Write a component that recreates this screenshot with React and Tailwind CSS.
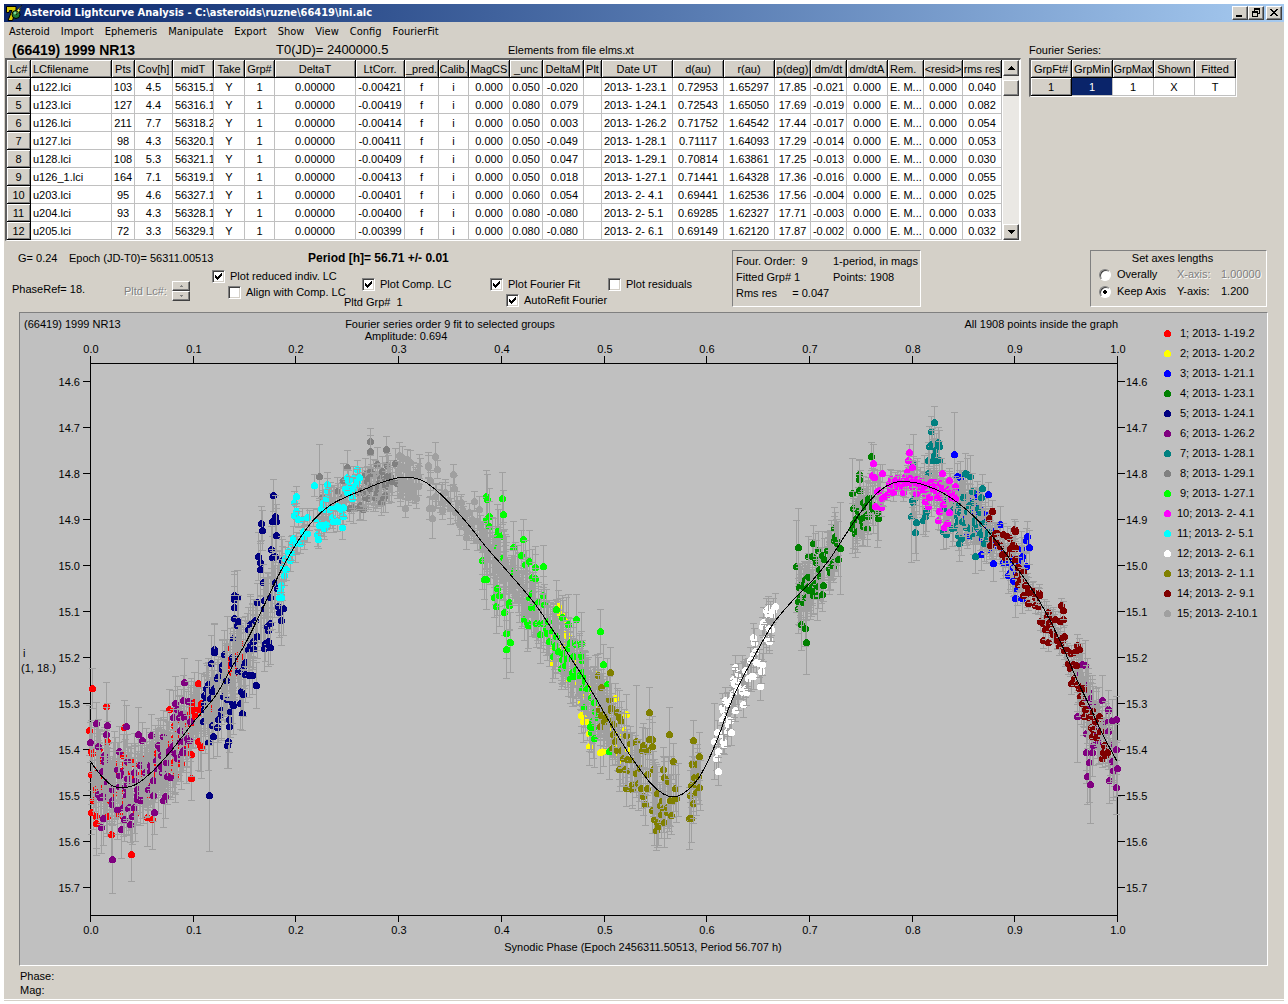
import { useState } from "react";

const menuItems = ["Asteroid", "Import", "Ephemeris", "Manipulate", "Export", "Show", "View", "Config", "FourierFit"];

const columns = [
  { label: "Lc#", width: 24 },
  { label: "LCfilename", width: 81, align: "left" },
  { label: "Pts", width: 23 },
  { label: "Cov[h]", width: 38 },
  { label: "midT", width: 41, align: "clip" },
  { label: "Take", width: 31 },
  { label: "Grp#", width: 30 },
  { label: "DeltaT", width: 81 },
  { label: "LtCorr.", width: 49 },
  { label: "_pred.", width: 34 },
  { label: "Calib.", width: 30 },
  { label: "MagCS", width: 41 },
  { label: "_unc", width: 33 },
  { label: "DeltaM", width: 41, align: "right" },
  { label: "Plt", width: 18 },
  { label: "Date UT", width: 71, align: "clip" },
  { label: "d(au)", width: 51 },
  { label: "r(au)", width: 51 },
  { label: "p(deg)", width: 36 },
  { label: "dm/dt", width: 36 },
  { label: "dm/dtA", width: 41 },
  { label: "Rem.", width: 36, align: "left" },
  { label: "<resid>", width: 39 },
  { label: "rms res", width: 39 },
];

const rows = [
  ["4", "u122.lci", "103", "4.5", "56315.1", "Y", "1", "0.00000", "-0.00421", "f", "i", "0.000", "0.050", "-0.020", "", "2013- 1-23.1", "0.72953", "1.65297", "17.85", "-0.021", "0.000", "E. M...", "0.000", "0.040"],
  ["5", "u123.lci", "127", "4.4", "56316.1", "Y", "1", "0.00000", "-0.00419", "f", "i", "0.000", "0.080", "0.079", "", "2013- 1-24.1", "0.72543", "1.65050", "17.69", "-0.019", "0.000", "E. M...", "0.000", "0.082"],
  ["6", "u126.lci", "211", "7.7", "56318.2", "Y", "1", "0.00000", "-0.00414", "f", "i", "0.000", "0.050", "0.003", "", "2013- 1-26.2", "0.71752", "1.64542", "17.44", "-0.017", "0.000", "E. M...", "0.000", "0.054"],
  ["7", "u127.lci", "98", "4.3", "56320.1", "Y", "1", "0.00000", "-0.00411", "f", "i", "0.000", "0.050", "-0.049", "", "2013- 1-28.1", "0.71117", "1.64093", "17.29", "-0.014", "0.000", "E. M...", "0.000", "0.053"],
  ["8", "u128.lci", "108", "5.3", "56321.1", "Y", "1", "0.00000", "-0.00409", "f", "i", "0.000", "0.050", "0.047", "", "2013- 1-29.1", "0.70814", "1.63861", "17.25", "-0.013", "0.000", "E. M...", "0.000", "0.030"],
  ["9", "u126_1.lci", "164", "7.1", "56319.1", "Y", "1", "0.00000", "-0.00413", "f", "i", "0.000", "0.050", "0.018", "", "2013- 1-27.1", "0.71441", "1.64328", "17.36", "-0.016", "0.000", "E. M...", "0.000", "0.055"],
  ["10", "u203.lci", "95", "4.6", "56327.1", "Y", "1", "0.00000", "-0.00401", "f", "i", "0.000", "0.060", "0.054", "", "2013- 2- 4.1", "0.69441", "1.62536", "17.56", "-0.004", "0.000", "E. M...", "0.000", "0.025"],
  ["11", "u204.lci", "93", "4.3", "56328.1", "Y", "1", "0.00000", "-0.00400", "f", "i", "0.000", "0.080", "-0.080", "", "2013- 2- 5.1", "0.69285", "1.62327", "17.71", "-0.003", "0.000", "E. M...", "0.000", "0.033"],
  ["12", "u205.lci", "72", "3.3", "56329.1", "Y", "1", "0.00000", "-0.00399", "f", "i", "0.000", "0.080", "-0.080", "", "2013- 2- 6.1", "0.69149", "1.62120", "17.87", "-0.002", "0.000", "E. M...", "0.000", "0.032"],
];

// Measured positions come in three overlapping sheets (A, B, C); each starts
// at its own x and has 3 units per pixel across and 2.904 down.
const sheetX = { A: 80, B: 400, C: 680 };

function readSheet(sheet, text) {
  return text
    .trim()
    .split(/\s+/)
    .map((pair) => {
      const [x, y] = pair.split(",").map(Number);
      return [sheetX[sheet] + x / 3, 360 + y / 2.904];
    });
}

const curve = [
  ...readSheet("A", "31,1168 60,1206 95,1238 130,1245 170,1234 220,1195 280,1130 340,1055 405,980 450,905 505,810 550,720 600,620 650,535 700,468 750,425 800,400 850,380 900,360 950,346"),
  ...readSheet("B", "10,344 45,346 80,360 130,400 200,475 260,548 330,625 400,705 450,775 500,850 560,940 620,1040 660,1105 700,1165 750,1230 790,1263 820,1271 850,1262 890,1225"),
  ...readSheet("C", "80,1175 110,1110 150,1005 180,940 225,860 275,775 330,710 400,640 450,580 500,505 550,435 600,382 640,360 680,356 730,365 790,390 850,430 900,475 950,530 1000,595 1050,660 1100,740 1150,840 1190,930 1230,1010 1265,1085 1311,1168"),
];

// fill: [from x, to x, count, spread around the fit]
// bars: same, for readings of which only the error bar is drawn
const series = [
  {
    label: "1; 2013- 1-19.2",
    color: "#ff0000",
    err: 26,
    A: "37,954 78,1009 27,1078 35,1145 32,1138 32,1206 45,1250 40,1280 32,1316 49,1326 49,1348 82,1110 76,1267 86,1285 82,1326 133,1070 154,1438 267,1015 354,942 334,1217 345,1010 350,1030 340,1020 356,1015 363,1000 348,1018 360,1120 362,1126 355,1108 345,1040 92,1378 200,1330 215,1335 285,1210 330,1090 105,1175 130,1150 465,912 440,835 450,870 448,890 470,860",
    fill: [[95, 195, 75, 34], [208, 240, 12, 14]],
    bars: [[92, 190, 70, 30]],
  },
  {
    label: "2; 2013- 1-20.2",
    color: "#ffff00",
    err: 20,
    B: "475,718 470,745 480,740 490,745 497,760 465,765 495,800 468,810 457,880 520,820 543,995 543,1033 550,1050 555,1040 560,1050 567,1085 567,1125 645,985 677,1030 590,915 600,1140 610,1138 660,1170 672,1078 680,1135 655,1090 520,945 505,925",
    fill: [[553, 622, 25, 22]],
    bars: [[553, 622, 60, 22]],
  },
  {
    label: "3; 2013- 1-21.1",
    color: "#0000ff",
    err: 15,
    C: "823,277,42 830,340 840,343 838,372 925,393 858,460 855,480 860,512 903,567 940,592 915,450 960,480 1042,513 1037,525 1047,547 1023,550 1025,572 1038,602 998,605 990,620 985,628 1000,643 1010,668 1005,694 1025,694 965,545 890,390 905,520 880,440 870,405",
    fill: [[957, 1022, 34, 20]],
    bars: [[957, 1028, 60, 18]],
  },
  {
    label: "4; 2013- 1-23.1",
    color: "#008000",
    err: 21,
    C: "353,545,39 348,600,46 400,533 415,555 385,572 395,573 405,578 408,590 427,568 432,580 440,555 461,492 466,515 462,525 468,525 479,548,46 470,535 475,580 450,605 458,600 448,608 460,590 450,618 385,630 375,638 372,650 360,655 368,660 383,660 395,660 405,650 415,660 428,657 390,672 400,685 410,685 425,681 379,690 361,690 369,707 355,722 362,770 375,782 379,823,32 572,283,14 538,335,14 538,349 537,380 541,381 517,389,35 520,432 550,415 556,430 570,405 575,420 560,450 540,455 530,465 525,480 520,475 530,500 525,505 550,485 560,490 545,470 516,492 565,455 590,445,35 595,463 580,435 535,440",
    fill: [[798, 824, 12, 14], [853, 877, 8, 10]],
    bars: [[798, 838, 44, 16], [853, 880, 24, 10]],
  },
  {
    label: "5; 2013- 1-24.1",
    color: "#000080",
    err: 23,
    A: "580,396,16 586,455 577,469 588,470 544,477,17 547,497 589,512 572,553 577,576 585,573 534,572 541,590 541,611 549,649 585,649 606,585 590,664 463,685 472,692 463,698 463,721 461,752 475,760 472,773 460,811 402,842 402,850 433,856 457,864 457,884 392,884 427,890 425,900 410,925 413,922 437,931 383,945 379,954 401,954 395,965 405,965 373,975 378,983 373,1000 371,1015 370,1050 390,985 423,1020 423,1030 415,1045 428,978 440,988 455,995 458,1005 450,1022 447,1045 447,1065 397,1063 411,1070 400,1096 384,1113 443,1110 440,1120 386,1265,56 532,706 526,758 516,766 510,770 505,785 532,803 571,768 561,776 563,787 571,837 555,825 565,818 553,840 520,842 505,842 510,830 520,820 551,700 570,692 551,722 494,880 491,890 484,907 475,907 496,915 508,918 515,918 527,947 484,965 490,973 479,1000 485,1029 594,718 610,722 597,736 602,757",
    fill: [],
    bars: [[204, 246, 56, 28], [246, 284, 36, 22]],
  },
  {
    label: "6; 2013- 1-26.2",
    color: "#800080",
    err: 23,
    A: "82,1062 313,939 308,990 323,994 285,1000 290,1015 278,1040 296,1040 312,1040 329,1050 303,1030 139,1067 214,1093 248,1094 175,1090 185,1105 116,1139 54,1125 73,1149 71,1167 79,1090 30,1113 48,1058 142,1168 161,1200 133,1197 112,1190 95,1250 118,1240 140,1235 59,1271 69,1270 96,1280 68,1332 62,1360 122,1365 133,1336 155,1328 150,1350 223,1316 97,1453,34 95,1292 112,1308 128,1302 145,1305 162,1300 170,1278 180,1280 190,1280 172,1265 205,1250 210,1242 218,1224 228,1165 232,1190 180,1180 195,1200 210,1195 245,1200 262,1210 270,1215 255,1270 240,1130 235,1120 258,1170 280,1120 290,1160 305,1140 310,1135 300,1078 322,1100 328,1105 268,1140 250,1280 300,1110",
    C: "1207,885 1215,888 1193,915 1190,942 1225,963 1230,985 1265,990 1235,1000 1283,1015 1285,1020 1190,1038,46 1277,1053 1295,1048 1307,1046 1275,1080 1217,1087,50 1240,1120 1287,1115 1218,1142 1235,1140 1307,1133 1227,1171,40 1295,1168 1300,1193 1310,1188 1220,1212 1287,1223 1231,1233,39 1309,1242 1255,1110 1250,1060",
    fill: [[94, 188, 20, 26], [1080, 1116, 8, 28]],
    bars: [[92, 190, 110, 28], [1076, 1116, 40, 26]],
  },
  {
    label: "7; 2013- 1-28.1",
    color: "#008080",
    err: 17,
    C: "763,184 752,210 775,240 757,245 746,254 757,252 768,260 778,254 763,280 758,292 743,294 768,292 777,292 745,332 700,305,30 697,410 703,405 700,415 737,440 735,455 730,468 692,457,46 707,472,38 706,501 855,332 862,333 871,340 877,384 907,376 903,400 853,395 848,400 867,425 862,440 895,432 900,445 885,465 855,475 845,470 832,455 830,480 820,490 815,490 835,510 842,520 838,535 790,500 798,507 870,490 880,515 900,505 885,475 910,475 905,500 920,520 912,535 886,573 925,500 800,435 820,435 815,440 840,445 905,475",
    fill: [[940, 985, 16, 20]],
    bars: [[912, 988, 80, 22]],
  },
  {
    label: "8; 2013- 1-29.1",
    color: "#808080",
    err: 14,
    A: "718,339,32 772,384 802,314 788,350 871,239 869,268 919,260 892,304 921,308 945,303 870,325 880,335 855,335 865,345 905,325 900,345 895,365 915,345 930,340 865,405 885,400 915,395 902,415 908,405 850,435 838,430 820,430 808,432 870,375 890,385 925,370 935,355 950,360 725,400 785,400 880,375 855,400",
    fill: [[350, 410, 14, 15]],
    bars: [[322, 410, 70, 16]],
  },
  {
    label: "9; 2013- 1-27.1",
    color: "#00ff00",
    err: 25,
    B: "257,398 262,408 306,404 308,451 266,457 258,465 268,485 295,497 292,512 299,515 340,545 368,524 362,570 374,594 387,588 406,605 428,600 397,632 405,636 246,585 251,640 257,640 245,548 288,548 340,615 310,575 290,665 297,685 281,692 289,716 311,736 326,715 326,705 319,795 331,823 319,843 430,686 396,680 388,690 392,720 405,720 415,705 432,712 372,755 382,765 385,772 408,768 420,768 430,768 445,760 420,800 440,795 447,820 455,790 469,727 487,750 503,770 528,756 465,835 473,848 459,862 510,822 528,828 543,826 490,855 487,870 500,868 520,862 543,860 545,875 495,890 483,898 515,910 520,922 510,925 540,915 555,935 545,955 560,955 601,791 608,886 622,944 572,983 583,995 552,1012 585,1023 590,1040 575,1050 570,1065 580,1070 573,1083 583,1100 627,1137",
    fill: [[545, 592, 10, 14]],
    bars: [[484, 540, 60, 22], [540, 608, 70, 20]],
  },
  {
    label: "10; 2013- 2- 4.1",
    color: "#ff00ff",
    err: 8,
    C: "688,271 684,294 580,303,19 575,338 583,343 607,332 695,314 682,326 674,340 650,342 645,350 628,360 638,365 660,355 665,360 630,378 640,385 620,393 610,400 596,380 590,383 605,405 586,427 603,430 655,375 670,370 680,350 690,345 700,350 712,345 715,360 725,352 695,370 708,388 720,380 730,378 735,390 740,378 750,358 757,358 765,358 780,360 787,332 806,350 785,375 805,378 826,370 810,385 748,400 735,412 745,428 770,400 780,400 790,420 778,442 808,445 774,468 800,475 793,487 815,405 825,405 820,395 670,385",
    fill: [[885, 955, 22, 7]],
    bars: [[885, 955, 14, 10]],
  },
  {
    label: "11; 2013- 2- 5.1",
    color: "#00ffff",
    err: 10,
    A: "703,365 742,362 741,380 647,399 641,416 648,440 643,452 655,465 666,465 681,460 710,465 743,408 739,405 730,415 722,432 735,436 750,435 758,432 770,428 776,430 783,435 790,455 785,487 772,470 760,470 755,460 738,478 722,480 732,490 718,482 710,508 714,523 668,500 680,505 672,518 660,535 648,535 640,520 636,535 636,560 625,558 615,578 630,585 610,605 618,610 613,628 603,655 600,675 603,690,38 597,690 800,342 804,352 820,345 832,320 838,344 830,355 808,370 795,375 820,375 812,390 815,405 800,385 825,365 790,430",
    fill: [],
    bars: [[280, 345, 18, 12]],
  },
  {
    label: "12; 2013- 2- 6.1",
    color: "#ffffff",
    err: 12,
    C: "285,717 280,728 265,723 258,728 270,740 263,740 277,740 250,765 247,776 270,777 273,785 220,807 222,823 266,812 268,818 225,848 218,858 209,875 228,880 238,882 245,886 242,907 212,920 218,920 205,925 240,950 165,895 175,912 160,930 165,945 170,960 183,950 165,935 195,955 190,968 198,968 135,990 150,995 155,990 145,1000 126,1012 130,1018 165,1020 190,1003 125,1045 148,1048 143,1060 110,1083 153,1083 140,1080 103,1108,38 130,1108 133,1118 115,1137 108,1158 115,1195 163,940 187,958 140,995 150,1048",
    fill: [[720, 772, 10, 7]],
    bars: [[716, 775, 22, 14]],
  },
  {
    label: "13; 2013- 2- 1.1",
    color: "#808000",
    err: 22,
    B: "631,910 593,919 603,952 626,988 632,1010 632,1020 652,1026 656,1040 664,1052 597,1015 603,1035 612,1050 600,1065 615,1040 620,1045 640,1060 638,1090 645,1110 679,1092 691,1115 707,1108,56 652,1135 662,1135 635,1130 748,1026 748,1103 756,1103 757,1125 730,1122 735,1130 740,1138 725,1135 808,1090 820,1168 670,1160 680,1163 693,1165 657,1190 674,1190 690,1195 707,1203 720,1187 740,1205 760,1192 789,1192 793,1215 803,1225 677,1247 697,1235 697,1248 713,1232 722,1245 742,1247 729,1270 736,1293 770,1260 825,1247 810,1280 829,1274 820,1280 785,1280 779,1296 790,1305 800,1300 757,1310 782,1320 800,1315 813,1325 762,1337 770,1345 773,1355 792,1345 768,1368 880,1105 898,1154 877,1177 890,1177 882,1214 895,1212 873,1238 885,1235 898,1242 888,1257 870,1267 880,1288 868,1334,31 873,1334",
    fill: [],
    bars: [[594, 640, 36, 18], [640, 678, 24, 20], [689, 700, 6, 20]],
  },
  {
    label: "14; 2013- 2- 9.1",
    color: "#800000",
    err: 9,
    C: "937,440 928,462 1002,495 1006,500 945,505 937,520 952,505 970,508 980,515 990,520 930,540 950,530 960,540 998,537 1005,548 965,565 975,570 985,565 975,575 990,548 1005,580 1015,605 1030,615 1010,628 1020,640 1015,652 1035,655 1045,665 1040,680 1030,685 1050,680 1058,675 1076,680 1065,690 1045,710 1065,715 1075,718 1105,735 1100,745 1115,750 1080,760 1088,768 1108,765 1125,755 1140,760 1148,755 1142,713 1150,730 1095,785 1105,783 1115,790 1120,800 1090,815 1103,823 1153,803 1145,815 1137,832 1130,815 1160,845 1172,855 1183,850 1192,830 1197,842 1190,845 1165,882 1180,885 1187,890 1170,898 1182,925 1190,945 1173,940 1198,955 1212,955 1200,980 1205,998 1215,1015 1213,1037 1228,1040 1240,1022 1245,1050 1258,1037 1232,1070 1240,1075 1262,1080 1235,1095 1248,1097 1272,1120 1270,1140 1280,1140 1275,1150 1265,1160",
    fill: [[992, 1104, 14, 7]],
    bars: [[990, 1110, 40, 13]],
  },
  {
    label: "15; 2013- 2-10.1",
    color: "#a0a0a0",
    err: 11,
    A: "958,280 966,285 980,290 990,300 960,310 975,320 985,330 1000,335 960,340 970,350 990,355 1015,338 965,370 980,380 995,390 1009,405 975,433 960,395 985,400 1000,370 1043,310 1015,370 955,325",
    B: "104,283 83,309 110,320 91,352 158,335 163,376 182,415 223,411 105,398 135,385 125,415 145,410 97,462,20 87,432 96,434 127,438 150,432 165,445 178,475 199,490 199,518 208,445 215,465 238,437 230,470 240,485 250,500 260,530 316,584 280,560 290,600 300,620 310,640 330,640 345,680 355,700",
    fill: [[460, 525, 24, 9]],
    bars: [[398, 420, 20, 20], [430, 525, 40, 12]],
  },
];

function fitAt(x) {
  const i = Math.max(1, curve.findIndex((p) => p[0] >= x));
  const [x0, y0] = curve[i - 1];
  const [x1, y1] = curve[i];
  return y0 + ((x - x0) / (x1 - x0)) * (y1 - y0);
}

function curvePath(points) {
  let d = `M${points[0][0]} ${points[0][1]}`;
  for (let i = 0; i < points.length - 1; i++) {
    const p0 = points[Math.max(i - 1, 0)];
    const p1 = points[i];
    const p2 = points[i + 1];
    const p3 = points[Math.min(i + 2, points.length - 1)];
    const c1 = [p1[0] + (p2[0] - p0[0]) / 6, p1[1] + (p2[1] - p0[1]) / 6];
    const c2 = [p2[0] - (p3[0] - p1[0]) / 6, p2[1] - (p3[1] - p1[1]) / 6];
    d += `C${c1.join(" ")} ${c2.join(" ")} ${p2.join(" ")}`;
  }
  return d;
}

function seriesPoints(s, seed) {
  let state = seed * 7919 + 13;
  const random = () => {
    state = (state * 16807) % 2147483647;
    return state / 2147483647;
  };
  const points = [];
  for (const sheet of ["A", "B", "C"]) {
    if (!s[sheet]) continue;
    const errs = s[sheet].split(/\s+/).map((p) => Number(p.split(",")[2]) || 0);
    readSheet(sheet, s[sheet]).forEach(([x, y], i) => {
      points.push({ x, y, dot: true, err: errs[i] || s.err * (0.75 + random() * 0.5) });
    });
  }
  const scatter = (ranges, dot) => {
    for (const [from, to, count, spread] of ranges) {
      for (let i = 0; i < count; i++) {
        const x = from + random() * (to - from);
        const y = fitAt(x) + (random() + random() - 1) * spread;
        points.push({ x, y, dot, err: s.err * (0.7 + random() * 0.5) });
      }
    }
  };
  scatter(s.fill, true);
  scatter(s.bars, false);
  return points
    .map((p) => ({ ...p, x: Math.round(p.x), y: Math.round(p.y), err: Math.round(p.err) }))
    .sort((a, b) => a.x - b.x);
}

const plotted = series.map((s, i) => ({ ...s, points: seriesPoints(s, i + 1) }));

const phaseTicks = [90, 193, 295, 398, 501, 604, 706, 809, 912, 1014, 1117];
const magTicks = Array.from({ length: 12 }, (_, i) => ({ y: 382 + i * 46, label: (14.6 + i * 0.1).toFixed(1) }));

function Lightcurve() {
  return (
    <svg viewBox="20 314 1247 652" className="block h-auto w-full" fontSize="11" role="img" aria-label="Lightcurve">
      <g fill="black">
        <text x="24" y="329">(66419) 1999 NR13</text>
        <text x="450" y="329" textAnchor="middle">Fourier series order 9 fit to selected groups</text>
        <text x="406" y="341" textAnchor="middle">Amplitude: 0.694</text>
        <text x="1118" y="329" textAnchor="end">All 1908 points inside the graph</text>
        <text x="643" y="952" textAnchor="middle">Synodic Phase (Epoch 2456311.50513, Period 56.707 h)</text>
        <text x="23" y="658">i</text>
        <text x="21" y="673">(1, 18.)</text>
        {phaseTicks.map((x, i) => (
          <g key={x} textAnchor="middle">
            <text x={x + 1} y="354">{(i / 10).toFixed(1)}</text>
            <text x={x + 1} y="935">{(i / 10).toFixed(1)}</text>
          </g>
        ))}
        {magTicks.map((t) => (
          <g key={t.y}>
            <text x="80" y={t.y + 5} textAnchor="end">{t.label}</text>
            <text x="1126" y={t.y + 5}>{t.label}</text>
          </g>
        ))}
      </g>

      <g stroke="black" fill="none" shapeRendering="crispEdges">
        <path d="M90.5 364.5H1117.5V916.5H90.5Z" />
        {phaseTicks.map((x) => (
          <path key={x} d={`M${x + 0.5} 357V364M${x + 0.5} 917V923`} />
        ))}
        {magTicks.map((t) => (
          <path key={t.y} d={`M83 ${t.y + 0.5}H90M1118 ${t.y + 0.5}H1125`} />
        ))}
      </g>

      {plotted.map((s) => (
        <g key={s.label} fill={s.color} shapeRendering="crispEdges">
          {s.points.map((p, i) => (
            <g key={i}>
              <path
                d={`M${p.x - 3} ${p.y - p.err + 0.5}h7m-3.5 0v${p.err * 2}m-3.5 0h7`}
                stroke="#a0a0a0"
                fill="none"
              />
              {p.dot && <circle cx={p.x + 0.5} cy={p.y + 0.5} r="3.5" />}
            </g>
          ))}
        </g>
      ))}
      <path d={curvePath(curve)} stroke="black" fill="none" shapeRendering="crispEdges" />

      {series.map((s, i) => (
        <g key={s.label}>
          <circle cx="1167.5" cy={334.5 + i * 20} r="3.5" fill={s.color} shapeRendering="crispEdges" />
          <text x={i < 9 ? 1180 : 1177} y={338 + i * 20}>{s.label}</text>
        </g>
      ))}
    </svg>
  );
}

const raised =
  "border border-t-white border-l-white border-r-[#404040] border-b-[#404040] bg-[#d4d0c8] shadow-[inset_-1px_-1px_0_#808080]";
const sunken = "border border-t-[#808080] border-l-[#808080] border-r-white border-b-white";
const gridFrame =
  "border-t-2 border-l-2 border-r border-b border-t-[#606060] border-l-[#606060] border-r-white border-b-white";
const fixedCell =
  "h-[18px] overflow-hidden border-r border-b border-black bg-[#d4d0c8] p-0 text-center font-normal whitespace-nowrap shadow-[inset_1px_1px_0_#fff,inset_-1px_-1px_0_#808080]";
const bodyCell = "h-[18px] overflow-hidden border-r border-b border-[#c0c0c0] whitespace-nowrap";

function bodyAlign(align) {
  if (align === "left" || align === "clip") return "pl-[2px] text-left";
  if (align === "right") return "pr-[5px] text-right";
  return "text-center";
}

function LightcurveTable() {
  return (
    <div className={`flex bg-white ${gridFrame}`}>
      <table className="w-[995px] table-fixed border-separate border-spacing-0">
        <colgroup>
          {columns.map((c) => (
            <col key={c.label} style={{ width: c.width }} />
          ))}
        </colgroup>
        <thead>
          <tr>
            {columns.map((c) => (
              <th key={c.label} className={fixedCell}>
                {c.align === "left" ? <div className="pl-[2px] text-left">{c.label}</div> : c.label}
              </th>
            ))}
          </tr>
        </thead>
        <tbody>
          {rows.map((row) => (
            <tr key={row[0]}>
              <th className={fixedCell}>{row[0]}</th>
              {row.slice(1).map((value, i) => (
                <td key={i} className={`${bodyCell} ${bodyAlign(columns[i + 1].align)}`}>
                  {value}
                </td>
              ))}
            </tr>
          ))}
        </tbody>
      </table>
      <div className="mx-px flex w-4 flex-col bg-[#eae8e4]">
        <button aria-label="Scroll up" className={`flex h-4 items-center justify-center ${raised}`}>
          <svg width="7" height="4" shapeRendering="crispEdges"><path d="M3 0h1v1h1v1h1v1h1v1H0V3h1V2h1V1h1z" /></svg>
        </button>
        <div className={`mt-1 h-4 ${raised}`} />
        <button aria-label="Scroll down" className={`mt-auto flex h-4 items-center justify-center ${raised}`}>
          <svg width="7" height="4" shapeRendering="crispEdges"><path d="M0 0h7v1H6v1H5v1H4v1H3V3H2V2H1V1H0z" /></svg>
        </button>
      </div>
    </div>
  );
}

function FourierTable() {
  return (
    <div className={`bg-white ${gridFrame}`}>
      <table className="w-[205px] table-fixed border-separate border-spacing-0">
        <thead>
          <tr>
            {["GrpFt#", "GrpMin", "GrpMax", "Shown", "Fitted"].map((label) => (
              <th key={label} className={fixedCell}>{label}</th>
            ))}
          </tr>
        </thead>
        <tbody className="text-center">
          <tr>
            <th className={fixedCell}>1</th>
            <td className={`${bodyCell} bg-[#0a246a] text-white`}>1</td>
            <td className={bodyCell}>1</td>
            <td className={bodyCell}>X</td>
            <td className={bodyCell}>T</td>
          </tr>
        </tbody>
      </table>
    </div>
  );
}

function Check({ label, defaultChecked }) {
  return (
    <label className="flex items-center gap-[5px] whitespace-nowrap">
      <span className="relative size-[13px]">
        <input
          type="checkbox"
          defaultChecked={defaultChecked}
          className="peer block size-[13px] appearance-none border border-t-[#808080] border-r-white border-b-white border-l-[#808080] bg-white shadow-[inset_1px_1px_0_#404040,inset_-1px_-1px_0_#d4d0c8]"
        />
        <svg
          viewBox="0 0 13 13"
          shapeRendering="crispEdges"
          className="pointer-events-none absolute inset-0 hidden peer-checked:block"
        >
          <path d="M3 5h1v1h1v1h1V6h1V5h1V4h1V3h1v3H9v1H8v1H7v1H6v1H5V9H4V8H3z" />
        </svg>
      </span>
      {label}
    </label>
  );
}

function AxisRadio({ label, value, selected, onSelect }) {
  return (
    <label className="flex items-center gap-[6px]">
      <input
        type="radio"
        name="axes"
        value={value}
        checked={selected === value}
        onChange={() => onSelect(value)}
        className="size-3 appearance-none rounded-full border border-t-[#808080] border-r-white border-b-white border-l-[#808080] bg-white shadow-[inset_1px_1px_0_#404040] checked:bg-[radial-gradient(circle,#000_0_2px,#fff_2px)]"
      />
      {label}
    </label>
  );
}

const disabledText = "text-[#808080] [text-shadow:1px_1px_0_#fff]";

function Controls() {
  const [axes, setAxes] = useState("keep");

  return (
    <div className="flex items-start pt-[9px]">
      <div className="w-[728px]">
        <div className="flex h-4 items-center whitespace-nowrap">
          <span className="ml-[14px] w-[51px]">G= 0.24</span>
          <span className="w-[239px]">Epoch (JD-T0)= 56311.00513</span>
          <span className="text-[12px] font-bold">Period [h]= 56.71 +/- 0.01</span>
        </div>
        <div className="flex items-start pt-[2px]">
          <span className="mt-[14px] ml-2 w-[112px]">PhaseRef= 18.</span>
          <span className={`mt-4 w-12 ${disabledText}`}>Pltd Lc#:</span>
          <div className="mt-[13px] w-[18px]">
            <button disabled aria-label="Next" className={`flex h-[10px] w-[18px] items-center justify-center ${raised}`}>
              <svg width="5" height="3" fill="#808080" shapeRendering="crispEdges"><path d="M2 0h1v1h1v1H1V1h1z" /></svg>
            </button>
            <button disabled aria-label="Previous" className={`flex h-[10px] w-[18px] items-center justify-center ${raised}`}>
              <svg width="5" height="3" fill="#808080" shapeRendering="crispEdges"><path d="M1 0h3v1H3v1H2V1H1z" /></svg>
            </button>
          </div>
          <div className="ml-[22px] w-[132px] pt-[1px]">
            <Check label="Plot reduced indiv. LC" defaultChecked />
            <div className="pt-[2px] pl-4">
              <Check label="Align with Comp. LC" />
            </div>
          </div>
          <div className="w-[146px] pt-[9px]">
            <div className="pl-[18px]">
              <Check label="Plot Comp. LC" defaultChecked />
            </div>
            <div className="pt-1 whitespace-pre">Pltd Grp#  1</div>
          </div>
          <div className="w-[118px] pt-[9px]">
            <Check label="Plot Fourier Fit" defaultChecked />
            <div className="pt-[2px] pl-4">
              <Check label="AutoRefit Fourier" defaultChecked />
            </div>
          </div>
          <div className="pt-[9px]">
            <Check label="Plot residuals" />
          </div>
        </div>
      </div>

      <div className={`grid h-[57px] w-[189px] grid-cols-[97px_1fr] content-start pt-[2px] pl-[3px] leading-4 whitespace-pre ${sunken}`}>
        <span>Four. Order:  9</span>
        <span>1-period, in mags</span>
        <span>Fitted Grp# 1</span>
        <span>Points: 1908</span>
        <span>Rms res     = 0.047</span>
      </div>

      <fieldset className={`mr-[17px] ml-auto h-[57px] w-[177px] pl-2 ${sunken}`}>
        <div className="pr-5 text-center leading-[15px]">Set axes lengths</div>
        <div className="grid grid-cols-[78px_44px_1fr] items-center leading-[17px]">
          <AxisRadio label="Overally" value="overall" selected={axes} onSelect={setAxes} />
          <span className={disabledText}>X-axis:</span>
          <span className={disabledText}>1.00000</span>
          <AxisRadio label="Keep Axis" value="keep" selected={axes} onSelect={setAxes} />
          <span>Y-axis:</span>
          <span>1.200</span>
        </div>
      </fieldset>
    </div>
  );
}

function TitleBar() {
  return (
    <div className="flex h-[18px] items-center bg-linear-to-r from-[#0a246a] to-[#a6caf0] pr-[2px] text-white">
      <svg viewBox="0 0 18 18" className="mr-[1px] ml-[1px] size-[18px]">
        <path d="M1.5 2.5H11V6L7.500 16.500H3L7 6.500H4.500L4 8.500H1.500Z" fill="#d8c800" stroke="#000" />
        <circle cx="11" cy="10.500" r="4" fill="#1e7a34" stroke="#000" />
        <circle cx="10" cy="9" r="1.500" fill="#7fd890" />
        <path d="M17 1L11 7h2l-2 4 5-5.500h-2z" fill="#ffff40" stroke="#000" strokeWidth=".5" />
      </svg>
      <h1 className="font-['DejaVu_Sans_Condensed','DejaVu_Sans',sans-serif] text-[11px] leading-[18px] font-bold whitespace-nowrap">
        Asteroid Lightcurve Analysis - C:\asteroids\ruzne\66419\ini.alc
      </h1>
      <div className="ml-auto flex text-black">
        <button aria-label="Minimize" className={`h-[14px] w-4 ${raised}`}>
          <svg viewBox="0 0 14 12" className="block" shapeRendering="crispEdges"><path d="M3 8h6v2H3z" /></svg>
        </button>
        <button aria-label="Restore" className={`h-[14px] w-4 ${raised}`}>
          <svg viewBox="0 0 14 12" className="block" shapeRendering="crispEdges">
            <path d="M5 1h6v6H9V6h1V3H6v1H5zM3 4h6v6H3zM4 6v3h4V6z" fillRule="evenodd" />
          </svg>
        </button>
        <button aria-label="Close" className={`ml-[2px] h-[14px] w-4 ${raised}`}>
          <svg viewBox="0 0 14 12" className="block" shapeRendering="crispEdges">
            <path d="M3 2h2v1h1v1h2V3h1V2h2v1h-1v1H9v1H8v1h1v1h1v1h1v1H9V8H8V7H6v1H5v1H3V8h1V7h1V6h1V5H5V4H4V3H3z" />
          </svg>
        </button>
      </div>
    </div>
  );
}

export default function App() {
  return (
    <div className="min-h-screen bg-white p-1 pb-px font-['Liberation_Sans',Arial,sans-serif] text-[11px] leading-[14px] text-black">
      <div className="border-b border-white bg-[#d4d0c8] pb-[2px]">
        <TitleBar />
        <nav className="flex h-5 items-center gap-[11px] pl-[5px] font-['DejaVu_Sans_Condensed','DejaVu_Sans',sans-serif]">
          {menuItems.map((item) => (
            <button key={item}>{item}</button>
          ))}
        </nav>

        <div className="flex items-start">
          <div>
            <div className="flex h-4 items-center whitespace-nowrap">
              <span className="ml-2 w-[264px] text-[14px] font-bold">(66419) 1999 NR13</span>
              <span className="w-[232px] text-[13px]">T0(JD)= 2400000.5</span>
              <span>Elements from file elms.xt</span>
            </div>
            <div className="ml-[1px]">
              <LightcurveTable />
            </div>
          </div>
          <div className="ml-2">
            <div className="flex h-4 items-center">Fourier Series:</div>
            <FourierTable />
          </div>
        </div>

        <Controls />

        <main className={`mt-[3px] mr-4 ml-[15px] bg-[#c0c0c0] ${sunken}`}>
          <Lightcurve />
        </main>

        <footer className="pt-[3px] pl-4">
          <div>Phase:</div>
          <div>Mag:</div>
        </footer>
      </div>
      <div className="h-px bg-[#d4d0c8]" />
    </div>
  );
}
